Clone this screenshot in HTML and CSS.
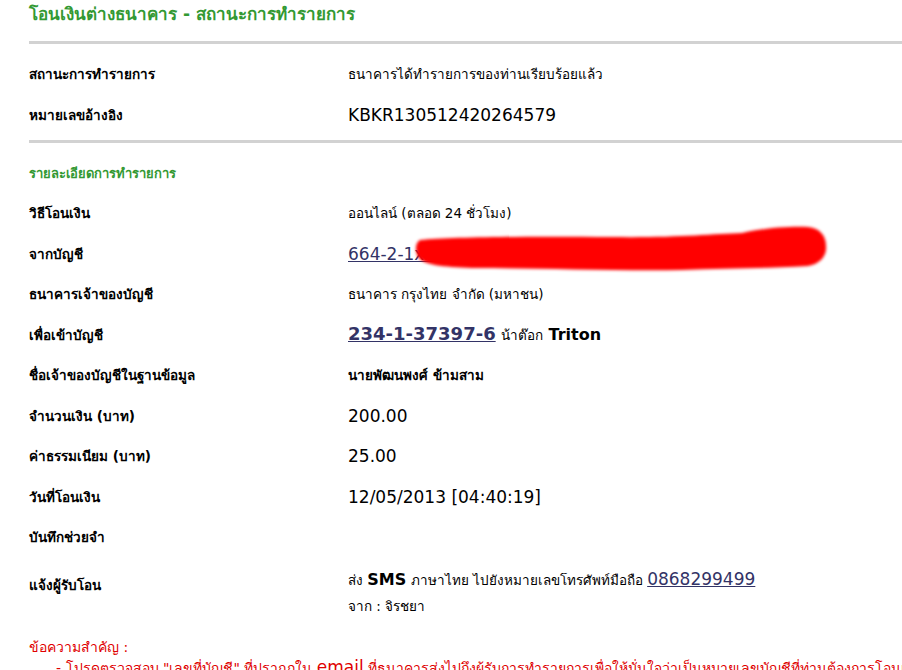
FILE: index.html
```html
<!DOCTYPE html>
<html lang="th">
<head>
<meta charset="utf-8">
<title>โอนเงินต่างธนาคาร - สถานะการทำรายการ</title>
<link rel="stylesheet" href="styles.css">
</head>
<body>
<div class="page">
  <h1 class="title">โอนเงินต่างธนาคาร - สถานะการทำรายการ</h1>
  <hr class="rule">
  <div class="grid first">
    <div class="label">สถานะการทำรายการ</div>
    <div class="value thai">ธนาคารได้ทำรายการของท่านเรียบร้อยแล้ว</div>
    <div class="label">หมายเลขอ้างอิง</div>
    <div class="value num">KBKR130512420264579</div>
  </div>
  <hr class="rule second">
  <div class="section">รายละเอียดการทำรายการ</div>
  <div class="grid">
    <div class="label">วิธีโอนเงิน</div>
    <div class="value thai">ออนไลน์ (ตลอด 24 ชั่วโมง)</div>
    <div class="label">จากบัญชี</div>
    <div class="value num"><span class="redact-wrap"><a class="link" href="#">664-2-1xxxxx-x</a><svg class="redact" width="420" height="56" viewBox="0 0 420 56"><defs><filter id="blur" x="-5%" y="-30%" width="110%" height="160%"><feGaussianBlur stdDeviation="1.7"/></filter></defs><path filter="url(#blur)" fill="#ff0000" d="M8 18 C40 15 120 14 200 15 C260 16 300 12 330 11 C350 6 380 4 396 5 C408 6 414 14 414 24 C415 34 408 42 396 44 C350 47 310 46 270 48 C200 49 120 46 60 46 C30 45 12 43 6 35 C3 28 3 21 8 18 Z"/></svg></span></div>
    <div class="label">ธนาคารเจ้าของบัญชี</div>
    <div class="value thai">ธนาคาร กรุงไทย จำกัด (มหาชน)</div>
    <div class="label">เพื่อเข้าบัญชี</div>
    <div class="value num"><span class="line"><a class="link strong" href="#">234-1-37397-6</a> <span class="thai">น้าต๊อก</span> <b class="name">Triton</b></span></div>
    <div class="label">ชื่อเจ้าของบัญชีในฐานข้อมูล</div>
    <div class="value thai b">นายพัฒนพงศ์ ข้ามสาม</div>
    <div class="label">จำนวนเงิน (บาท)</div>
    <div class="value num">200.00</div>
    <div class="label">ค่าธรรมเนียม (บาท)</div>
    <div class="value num">25.00</div>
    <div class="label">วันที่โอนเงิน</div>
    <div class="value num">12/05/2013 [04:40:19]</div>
    <div class="label">บันทึกช่วยจำ</div>
    <div class="value"></div>
    <div class="label tall">แจ้งผู้รับโอน</div>
    <div class="value tall">
      <div class="sms"><span class="thai">ส่ง</span> <b class="name">SMS</b> <span class="thai">ภาษาไทย ไปยังหมายเลขโทรศัพท์มือถือ</span> <a class="link num" href="#">0868299499</a></div>
      <div class="from thai">จาก : จิรชยา</div>
    </div>
  </div>
  <div class="notice">
    <div class="notice-title">ข้อความสำคัญ :</div>
    <ul class="notice-list">
      <li>โปรดตรวจสอบ "เลขที่บัญชี" ที่ปรากฏใน <span class="em">email</span> ที่ธนาคารส่งไปถึงผู้รับการทำรายการเพื่อให้มั่นใจว่าเป็นหมายเลขบัญชีที่ท่านต้องการโอนเงิน</li>
    </ul>
  </div>
</div>
</body>
</html>
```
FILE: styles.css
```css
html, body {
  margin: 0;
  padding: 0;
  background: #ffffff;
}
body {
  font-family: "DejaVu Sans", sans-serif;
  color: #000;
}
.page {
  padding: 2px 0 0 29px;
}
.title {
  margin: 0;
  font-size: 17px;
  font-weight: bold;
  color: #339933;
  line-height: 24px;
  height: 24px;
}
.rule {
  margin: 15px 0 0 0;
  border: 0;
  height: 3px;
  background: #d2d2d2;
}
.rule.second {
  margin-top: 5px;
}
.grid {
  display: grid;
  grid-template-columns: 319px 1fr;
  grid-auto-rows: minmax(40.5px, auto);
}
.grid.first {
  padding-top: 10px;
}
.label, .value {
  display: flex;
  align-items: center;
}
.label {
  font-size: 13.5px;
  font-weight: bold;
}
.value {
  font-size: 13.5px;
}
.value.num, .num {
  font-size: 17px;
}
.thai {
  font-size: 13.5px;
}
.b { font-weight: bold; }
.section {
  margin-top: 10px;
  height: 40px;
  display: flex;
  align-items: center;
  font-size: 13px;
  font-weight: bold;
  color: #339933;
}
.link {
  color: #333366;
}
.strong { font-weight: bold; font-size: 18px; }
.name { font-weight: bold; font-size: 16px; }
.redact-wrap {
  position: relative;
  display: inline-block;
}
.redact {
  position: absolute;
  left: 64px;
  top: -22px;
}
.label.tall {
  height: 55px;
}
.value.tall {
  height: 55px;
  display: block;
  padding-top: 9px;
  box-sizing: border-box;
}
.sms { line-height: 24px; }
.from { line-height: 22px; margin-top: 3px; }
.notice {
  margin-top: 24px;
  color: #e00000;
}
.notice-title {
  font-size: 14px;
  line-height: 20px;
}
.notice-list {
  margin: 0;
  padding-left: 27px;
  font-size: 14px;
  line-height: 20px;
  list-style: none;
  white-space: nowrap;
}
.notice-list li::before { content: "- "; }
.em { font-size: 17px; }
```
